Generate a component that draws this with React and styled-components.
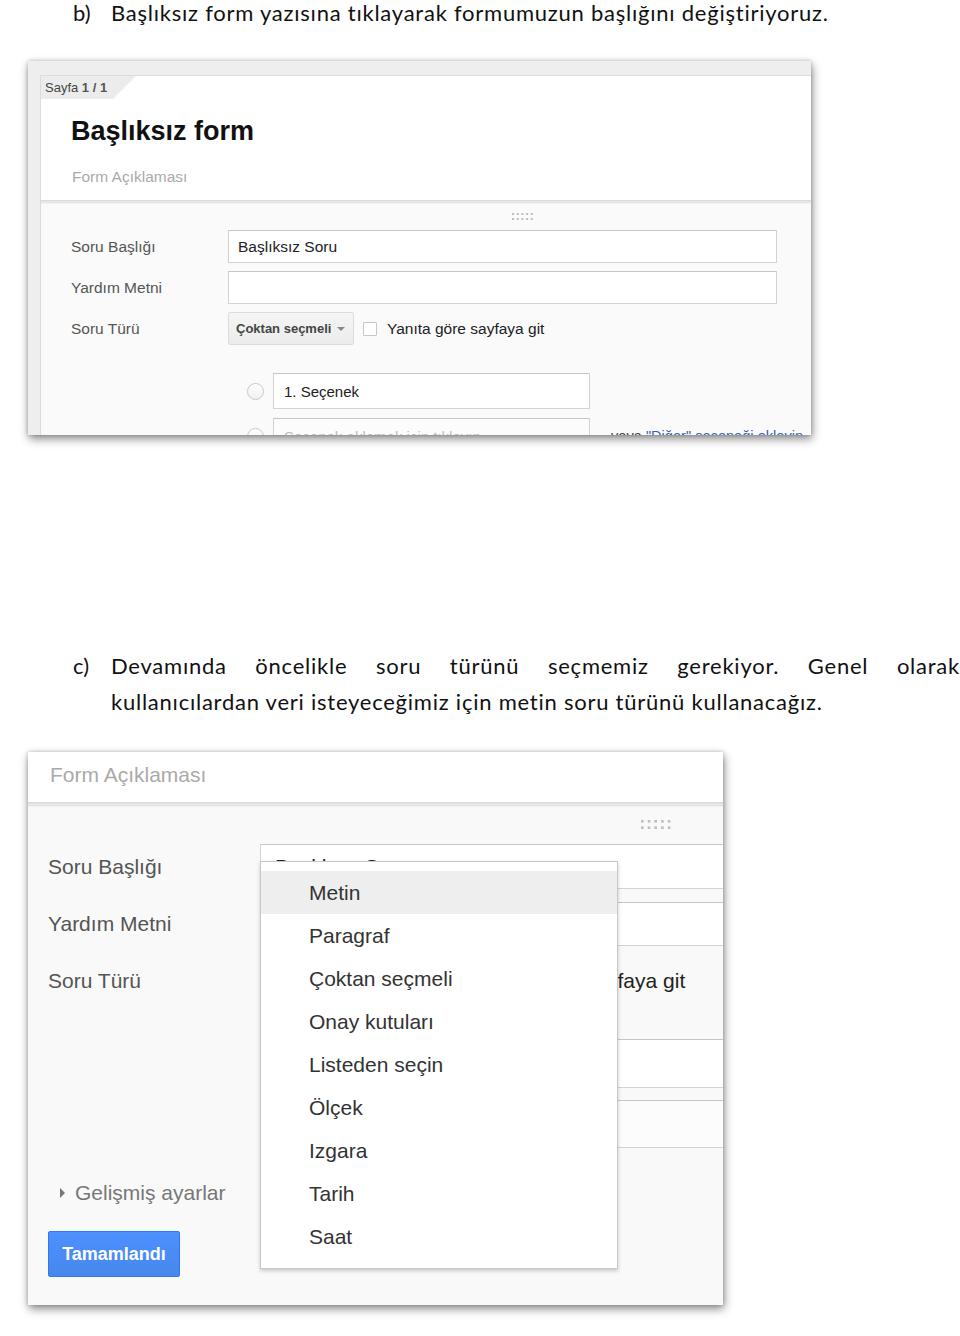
import React from 'react';
import styled, { createGlobalStyle } from 'styled-components';

const Global = createGlobalStyle`
  html, body { margin: 0; padding: 0; background: #fff; }
  body { font-family: "Liberation Sans", Arial, sans-serif; }
  * { box-sizing: border-box; }
`;

const Page = styled.div`
  width: 960px;
  height: 1336px;
  overflow: hidden;
  background: #fff;
`;

const DocPara = styled.div`
  display: grid;
  grid-template-columns: 38px 849px;
  padding-left: 73px;
  margin-top: ${p => p.$mt || 0}px;
  font-family: Lato, "Open Sans", sans-serif;
  font-size: 22px;
  letter-spacing: 0.76px;
  line-height: ${p => p.$lh}px;
  color: #111;
`;

const DocMarker = styled.span`
  letter-spacing: 0;
`;

const DocLine = styled.div`
  white-space: nowrap;
  text-align: ${p => (p.$justify ? 'justify' : 'left')};
  text-align-last: ${p => (p.$justify ? 'justify' : 'auto')};
`;

const Shot = styled.div`
  position: relative;
  margin-left: 28px;
  margin-top: ${p => p.$mt}px;
  width: ${p => p.$w}px;
  height: ${p => p.$h}px;
  overflow: hidden;
  background: ${p => p.$bg};
  padding: ${p => p.$pad};
  box-shadow: 1px 4px 9px rgba(0, 0, 0, 0.45), 0 0 4px rgba(0, 0, 0, 0.2);
`;

const Inner = styled.div`
  background: #fafafa;
  height: 100%;
  border-top: 1px solid #dcdcdc;
  border-left: 1px solid #dcdcdc;
`;

const Header = styled.div`
  background: #fff;
  padding-bottom: 13px;
`;

const PageTab = styled.div`
  width: 95px;
  height: 23px;
  background: #ececec;
  clip-path: polygon(0 0, 100% 0, 72px 100%, 0 100%);
  padding-left: 4px;
  font-size: 13px;
  line-height: 23px;
  color: #444;
  b { font-weight: bold; color: #555; }
`;

const FormTitle = styled.div`
  margin-top: 16px;
  padding-left: 30px;
  font-size: 27px;
  font-weight: bold;
  line-height: 32px;
  color: #111;
`;

const FormDesc = styled.div`
  margin-top: ${p => p.$mt || 0}px;
  padding-left: ${p => p.$pl}px;
  font-size: ${p => p.$fs}px;
  line-height: ${p => p.$lh}px;
  color: #aaa;
`;

const Divider = styled.div`
  height: ${p => p.$h}px;
  background: linear-gradient(#d6d6d6, #ececec);
  box-shadow: 0 1px 2px rgba(0, 0, 0, 0.12);
`;

const Body = styled.div`
  padding-left: ${p => p.$pl}px;
`;

const DragRow = styled.div`
  height: ${p => p.$h}px;
  display: flex;
  align-items: center;
  padding-left: ${p => p.$ml}px;
`;

const FieldGrid = styled.div`
  display: grid;
  grid-template-columns: ${p => p.$cols};
  grid-auto-rows: ${p => p.$rh}px;
  row-gap: ${p => p.$gap}px;
  align-items: center;
`;

const Label = styled.div`
  font-size: ${p => p.$fs}px;
  color: #555;
  white-space: nowrap;
`;

const TextBox = styled.div`
  flex: none;
  height: ${p => p.$h}px;
  width: ${p => p.$w};
  background: ${p => p.$bg || '#fff'};
  border: 1px solid #d3d3d3;
  border-top-color: #c6c6c6;
  display: flex;
  align-items: center;
  padding-left: ${p => p.$pl}px;
  font-size: ${p => p.$fs}px;
  color: ${p => p.$color || '#222'};
  white-space: nowrap;
  overflow: hidden;
`;

const TypeRow = styled.div`
  display: flex;
  align-items: center;
  height: 100%;
  white-space: nowrap;
`;

const SelectButton = styled.div`
  flex: none;
  width: ${p => p.$w}px;
  height: ${p => p.$h}px;
  background: linear-gradient(#f5f5f5, #ececec);
  border: 1px solid #dcdcdc;
  border-radius: 2px;
  display: flex;
  align-items: center;
  padding-left: 7px;
  gap: 6px;
  font-size: ${p => p.$fs}px;
  font-weight: bold;
  color: #444;
`;

const Caret = styled.span`
  width: 0;
  height: 0;
  border-left: 4px solid transparent;
  border-right: 4px solid transparent;
  border-top: 4px solid #888;
`;

const CheckBox = styled.span`
  width: ${p => p.$s}px;
  height: ${p => p.$s}px;
  border: 1px solid #c6c6c6;
  border-radius: 1px;
  background: #fff;
  margin-left: ${p => p.$ml}px;
  flex: none;
`;

const TypeText = styled.span`
  margin-left: ${p => p.$ml}px;
  font-size: ${p => p.$fs}px;
  color: #222;
`;

const Options = styled.div`
  margin-top: ${p => p.$mt}px;
  padding-left: ${p => p.$pl}px;
  display: flex;
  flex-direction: column;
  gap: ${p => p.$gap}px;
`;

const OptionRow = styled.div`
  display: flex;
  align-items: center;
  gap: 9px;
  white-space: nowrap;
`;

const Radio = styled.span`
  width: 17px;
  height: 17px;
  border-radius: 50%;
  border: 1px solid #c8c8c8;
  background: linear-gradient(#fff, #f0f0f0);
  flex: none;
`;

const OtherText = styled.span`
  margin-left: 12px;
  font-size: 14.6px;
  color: #444;
  a { color: #3762b3; text-decoration: none; }
`;

const Shot2Header = styled.div`
  background: #fff;
  height: 50px;
`;

const Advanced = styled.div`
  margin-top: 33px;
  padding-left: 12px;
  display: flex;
  align-items: center;
  gap: 10px;
  height: 24px;
  font-size: 21px;
  color: #777;
`;

const Tri = styled.span`
  width: 0;
  height: 0;
  border-top: 5px solid transparent;
  border-bottom: 5px solid transparent;
  border-left: 5px solid #777;
`;

const DoneButton = styled.div`
  margin-top: 26px;
  width: 132px;
  height: 46px;
  border: 1px solid #3079ed;
  border-radius: 2px;
  background: linear-gradient(#4d90fe, #4787ed);
  color: #fff;
  font-size: 18px;
  font-weight: bold;
  display: flex;
  align-items: center;
  justify-content: center;
`;

const Menu = styled.div`
  position: absolute;
  left: 232px;
  top: 109px;
  width: 358px;
  height: 408px;
  background: #fff;
  border: 1px solid #c8c8c8;
  box-shadow: 0 2px 4px rgba(0, 0, 0, 0.2);
  padding-top: 9px;
`;

const MenuItem = styled.div`
  height: 43px;
  line-height: 43px;
  padding-left: 48px;
  font-size: 21px;
  color: #333;
  background: ${p => (p.$active ? '#eeeeee' : 'transparent')};
`;

const Dots = ({ w, h, step, r }) => (
  <svg width={w} height={h} viewBox={`0 0 ${w} ${h}`}>
    {[0, 1].map(row =>
      [0, 1, 2, 3, 4].map(col => (
        <rect
          key={`${row}-${col}`}
          x={col * step}
          y={row * (h - r)}
          width={r}
          height={r}
          fill="#bdbdbd"
        />
      ))
    )}
  </svg>
);

const menuItems = [
  'Metin',
  'Paragraf',
  'Çoktan seçmeli',
  'Onay kutuları',
  'Listeden seçin',
  'Ölçek',
  'Izgara',
  'Tarih',
  'Saat',
];

export default function App() {
  return (
    <Page>
      <Global />
      <DocPara $lh={26}>
        <DocMarker>b)</DocMarker>
        <DocLine>Başlıksız form yazısına tıklayarak formumuzun başlığını değiştiriyoruz.</DocLine>
      </DocPara>

      <Shot $mt={35} $w={783} $h={374} $bg="#eeeeee" $pad="14px 0 0 12px">
        <Inner>
          <Header>
            <PageTab>
              Sayfa <b>1 / 1</b>
            </PageTab>
            <FormTitle>Başlıksız form</FormTitle>
            <FormDesc $mt={20} $pl={31} $fs={15.5} $lh={20}>
              Form Açıklaması
            </FormDesc>
          </Header>
          <Divider $h={2} />
          <Body $pl={30}>
            <DragRow $h={28} $ml={441}>
              <Dots w={21} h={7} step={4.7} r={2} />
            </DragRow>
            <FieldGrid $cols="157px 549px" $rh={33} $gap={8}>
              <Label $fs={15.5}>Soru Başlığı</Label>
              <TextBox $h={33} $w="549px" $pl={9} $fs={15.5}>
                Başlıksız Soru
              </TextBox>
              <Label $fs={15.5}>Yardım Metni</Label>
              <TextBox $h={33} $w="549px" $pl={9} $fs={15.5} />
              <Label $fs={15.5}>Soru Türü</Label>
              <TypeRow>
                <SelectButton $w={126} $h={33} $fs={13}>
                  Çoktan seçmeli <Caret />
                </SelectButton>
                <CheckBox $s={14} $ml={9} />
                <TypeText $ml={10} $fs={15.5}>
                  Yanıta göre sayfaya git
                </TypeText>
              </TypeRow>
            </FieldGrid>
            <Options $mt={28} $pl={176} $gap={9}>
              <OptionRow>
                <Radio />
                <TextBox $h={36} $w="317px" $pl={10} $fs={15}>
                  1. Seçenek
                </TextBox>
              </OptionRow>
              <OptionRow>
                <Radio />
                <TextBox $h={36} $w="317px" $pl={10} $fs={15} $color="#bbb" $bg="#fcfcfc">
                  Seçenek eklemek için tıklayın
                </TextBox>
                <OtherText>
                  veya <a>"Diğer" seçeneği ekleyin</a>
                </OtherText>
              </OptionRow>
            </Options>
          </Body>
        </Inner>
      </Shot>

      <DocPara $lh={36} $mt={213}>
        <DocMarker>c)</DocMarker>
        <div>
          <DocLine $justify>Devamında öncelikle soru türünü seçmemiz gerekiyor. Genel olarak</DocLine>
          <DocLine>kullanıcılardan veri isteyeceğimiz için metin soru türünü kullanacağız.</DocLine>
        </div>
      </DocPara>

      <Shot $mt={32} $w={695} $h={553} $bg="#f9f9f9" $pad="0">
        <Shot2Header>
          <FormDesc $pl={22} $fs={21} $lh={46}>
            Form Açıklaması
          </FormDesc>
        </Shot2Header>
        <Divider $h={3} />
        <Body $pl={20}>
          <DragRow $h={39} $ml={593}>
            <Dots w={30} h={9} step={6.7} r={2.6} />
          </DragRow>
          <FieldGrid $cols="212px 470px" $rh={45} $gap={12}>
            <Label $fs={21}>Soru Başlığı</Label>
            <TextBox $h={45} $w="470px" $pl={14} $fs={21}>
              Başlıksız Soru
            </TextBox>
            <Label $fs={21}>Yardım Metni</Label>
            <TextBox $h={44} $w="470px" $pl={14} $fs={21} />
            <Label $fs={21}>Soru Türü</Label>
            <TypeRow>
              <SelectButton $w={170} $h={44} $fs={17}>
                Çoktan seçmeli <Caret />
              </SelectButton>
              <CheckBox $s={19} $ml={12} />
              <TypeText $ml={11} $fs={21}>
                Yanıta göre sayfaya git
              </TypeText>
            </TypeRow>
          </FieldGrid>
          <Options $mt={36} $pl={238} $gap={12}>
            <OptionRow>
              <Radio />
              <TextBox $h={49} $w="460px" $pl={14} $fs={21}>
                1. Seçenek
              </TextBox>
            </OptionRow>
            <OptionRow>
              <Radio />
              <TextBox $h={48} $w="460px" $pl={14} $fs={21} $color="#bbb" $bg="#fcfcfc">
                Seçenek eklemek için tıklayın
              </TextBox>
            </OptionRow>
          </Options>
          <Advanced>
            <Tri />
            Gelişmiş ayarlar
          </Advanced>
          <DoneButton>Tamamlandı</DoneButton>
        </Body>
        <Menu>
          {menuItems.map((m, i) => (
            <MenuItem key={m} $active={i === 0}>
              {m}
            </MenuItem>
          ))}
        </Menu>
      </Shot>
    </Page>
  );
}
